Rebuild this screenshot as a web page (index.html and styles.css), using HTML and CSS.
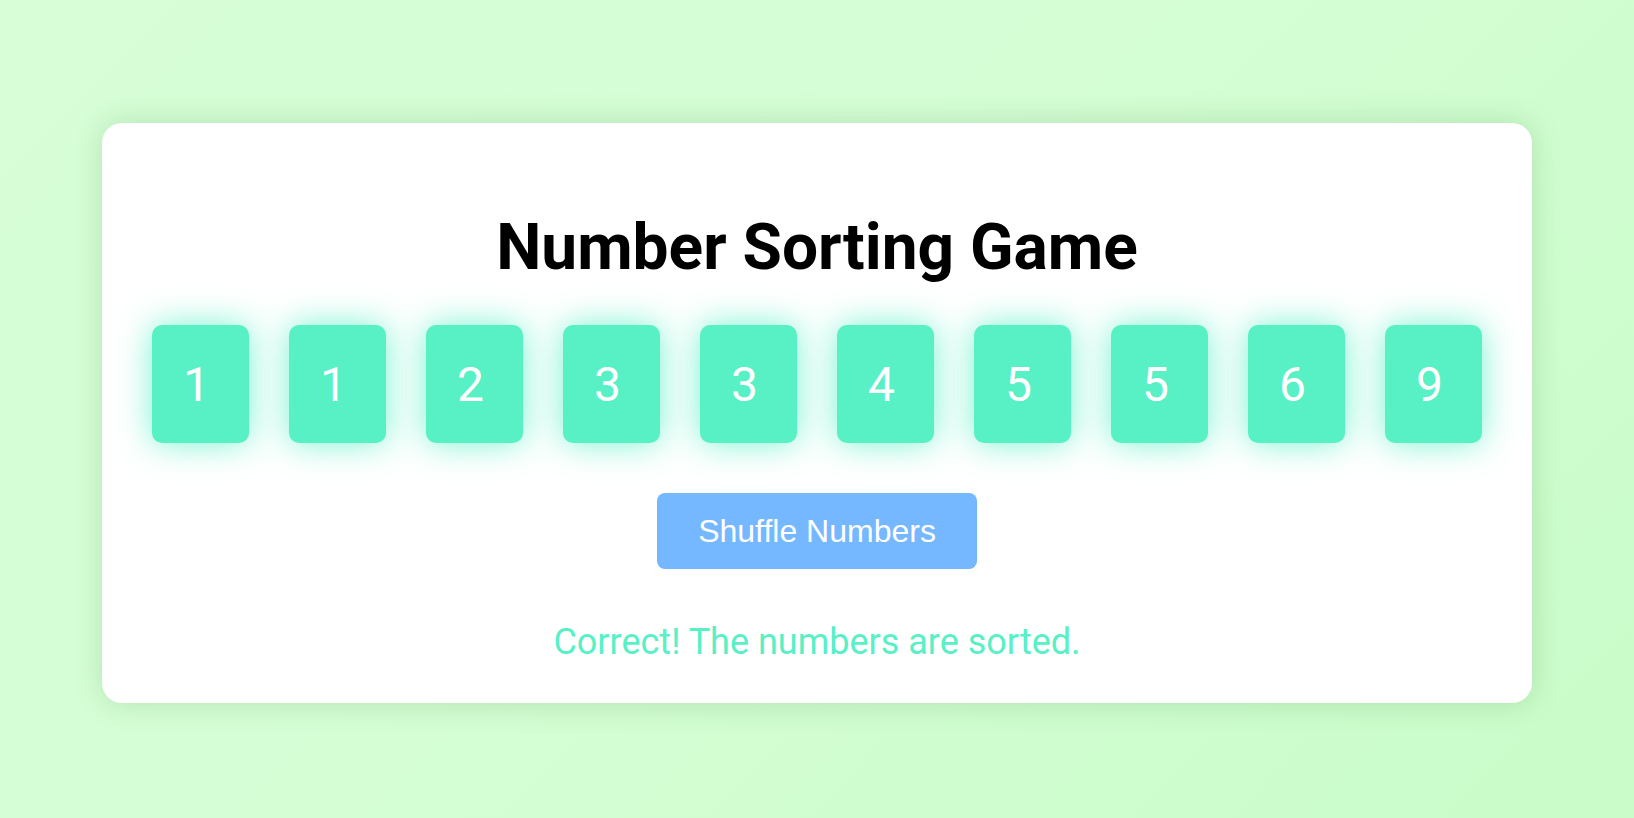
FILE: index.html
```html
<!DOCTYPE html>
<html lang="en">
<head>
<meta charset="utf-8">
<title>Number Sorting Game</title>
<link rel="stylesheet" href="styles.css">
</head>
<body>
<div class="card">
  <h1 class="title">Number Sorting Game</h1>
  <div class="tiles">
    <div class="tile">1</div>
    <div class="tile">1</div>
    <div class="tile">2</div>
    <div class="tile">3</div>
    <div class="tile">3</div>
    <div class="tile">4</div>
    <div class="tile">5</div>
    <div class="tile">5</div>
    <div class="tile">6</div>
    <div class="tile">9</div>
  </div>
  <button class="shuffle">Shuffle Numbers</button>
  <p class="message">Correct! The numbers are sorted.</p>
</div>
</body>
</html>
```

FILE: styles.css
```css
html, body {
  margin: 0;
  padding: 0;
}
body {
  min-height: 818px;
  box-sizing: border-box;
  padding: 123px 102px 0;
  background: linear-gradient(135deg, #d7fed7 0%, #d6fed6 40%, #c9fcc9 100%);
  font-family: Roboto, "Liberation Sans", sans-serif;
}
.card {
  background: #ffffff;
  border-radius: 20px;
  box-shadow: 0 0 30px rgba(40, 110, 40, 0.2);
  padding: 87px 50px 40px;
  display: flex;
  flex-direction: column;
  align-items: center;
}
.title {
  margin: 0;
  font-size: 64px;
  font-weight: 700;
  color: #000;
  line-height: 75px;
}
.tiles {
  margin-top: 40px;
  display: flex;
  gap: 40px;
  align-self: stretch;
}
.tile {
  flex: 1;
  height: 118px;
  box-sizing: border-box;
  padding-right: 8px;
  background: #58f0c5;
  border-radius: 10px;
  box-shadow: 0 0 34px rgba(88, 240, 197, 0.8);
  color: #fff;
  font-size: 48px;
  display: flex;
  align-items: center;
  justify-content: center;
}
.shuffle {
  margin-top: 50px;
  background: #75b8ff;
  color: #fff;
  border: none;
  border-radius: 8px;
  padding: 20px 41px;
  font-family: "Liberation Sans", Arial, sans-serif;
  font-size: 32px;
  line-height: 36px;
}
.message {
  margin: 52px 0 0;
  color: #58f0c5;
  font-size: 36px;
  line-height: 42px;
}
```
